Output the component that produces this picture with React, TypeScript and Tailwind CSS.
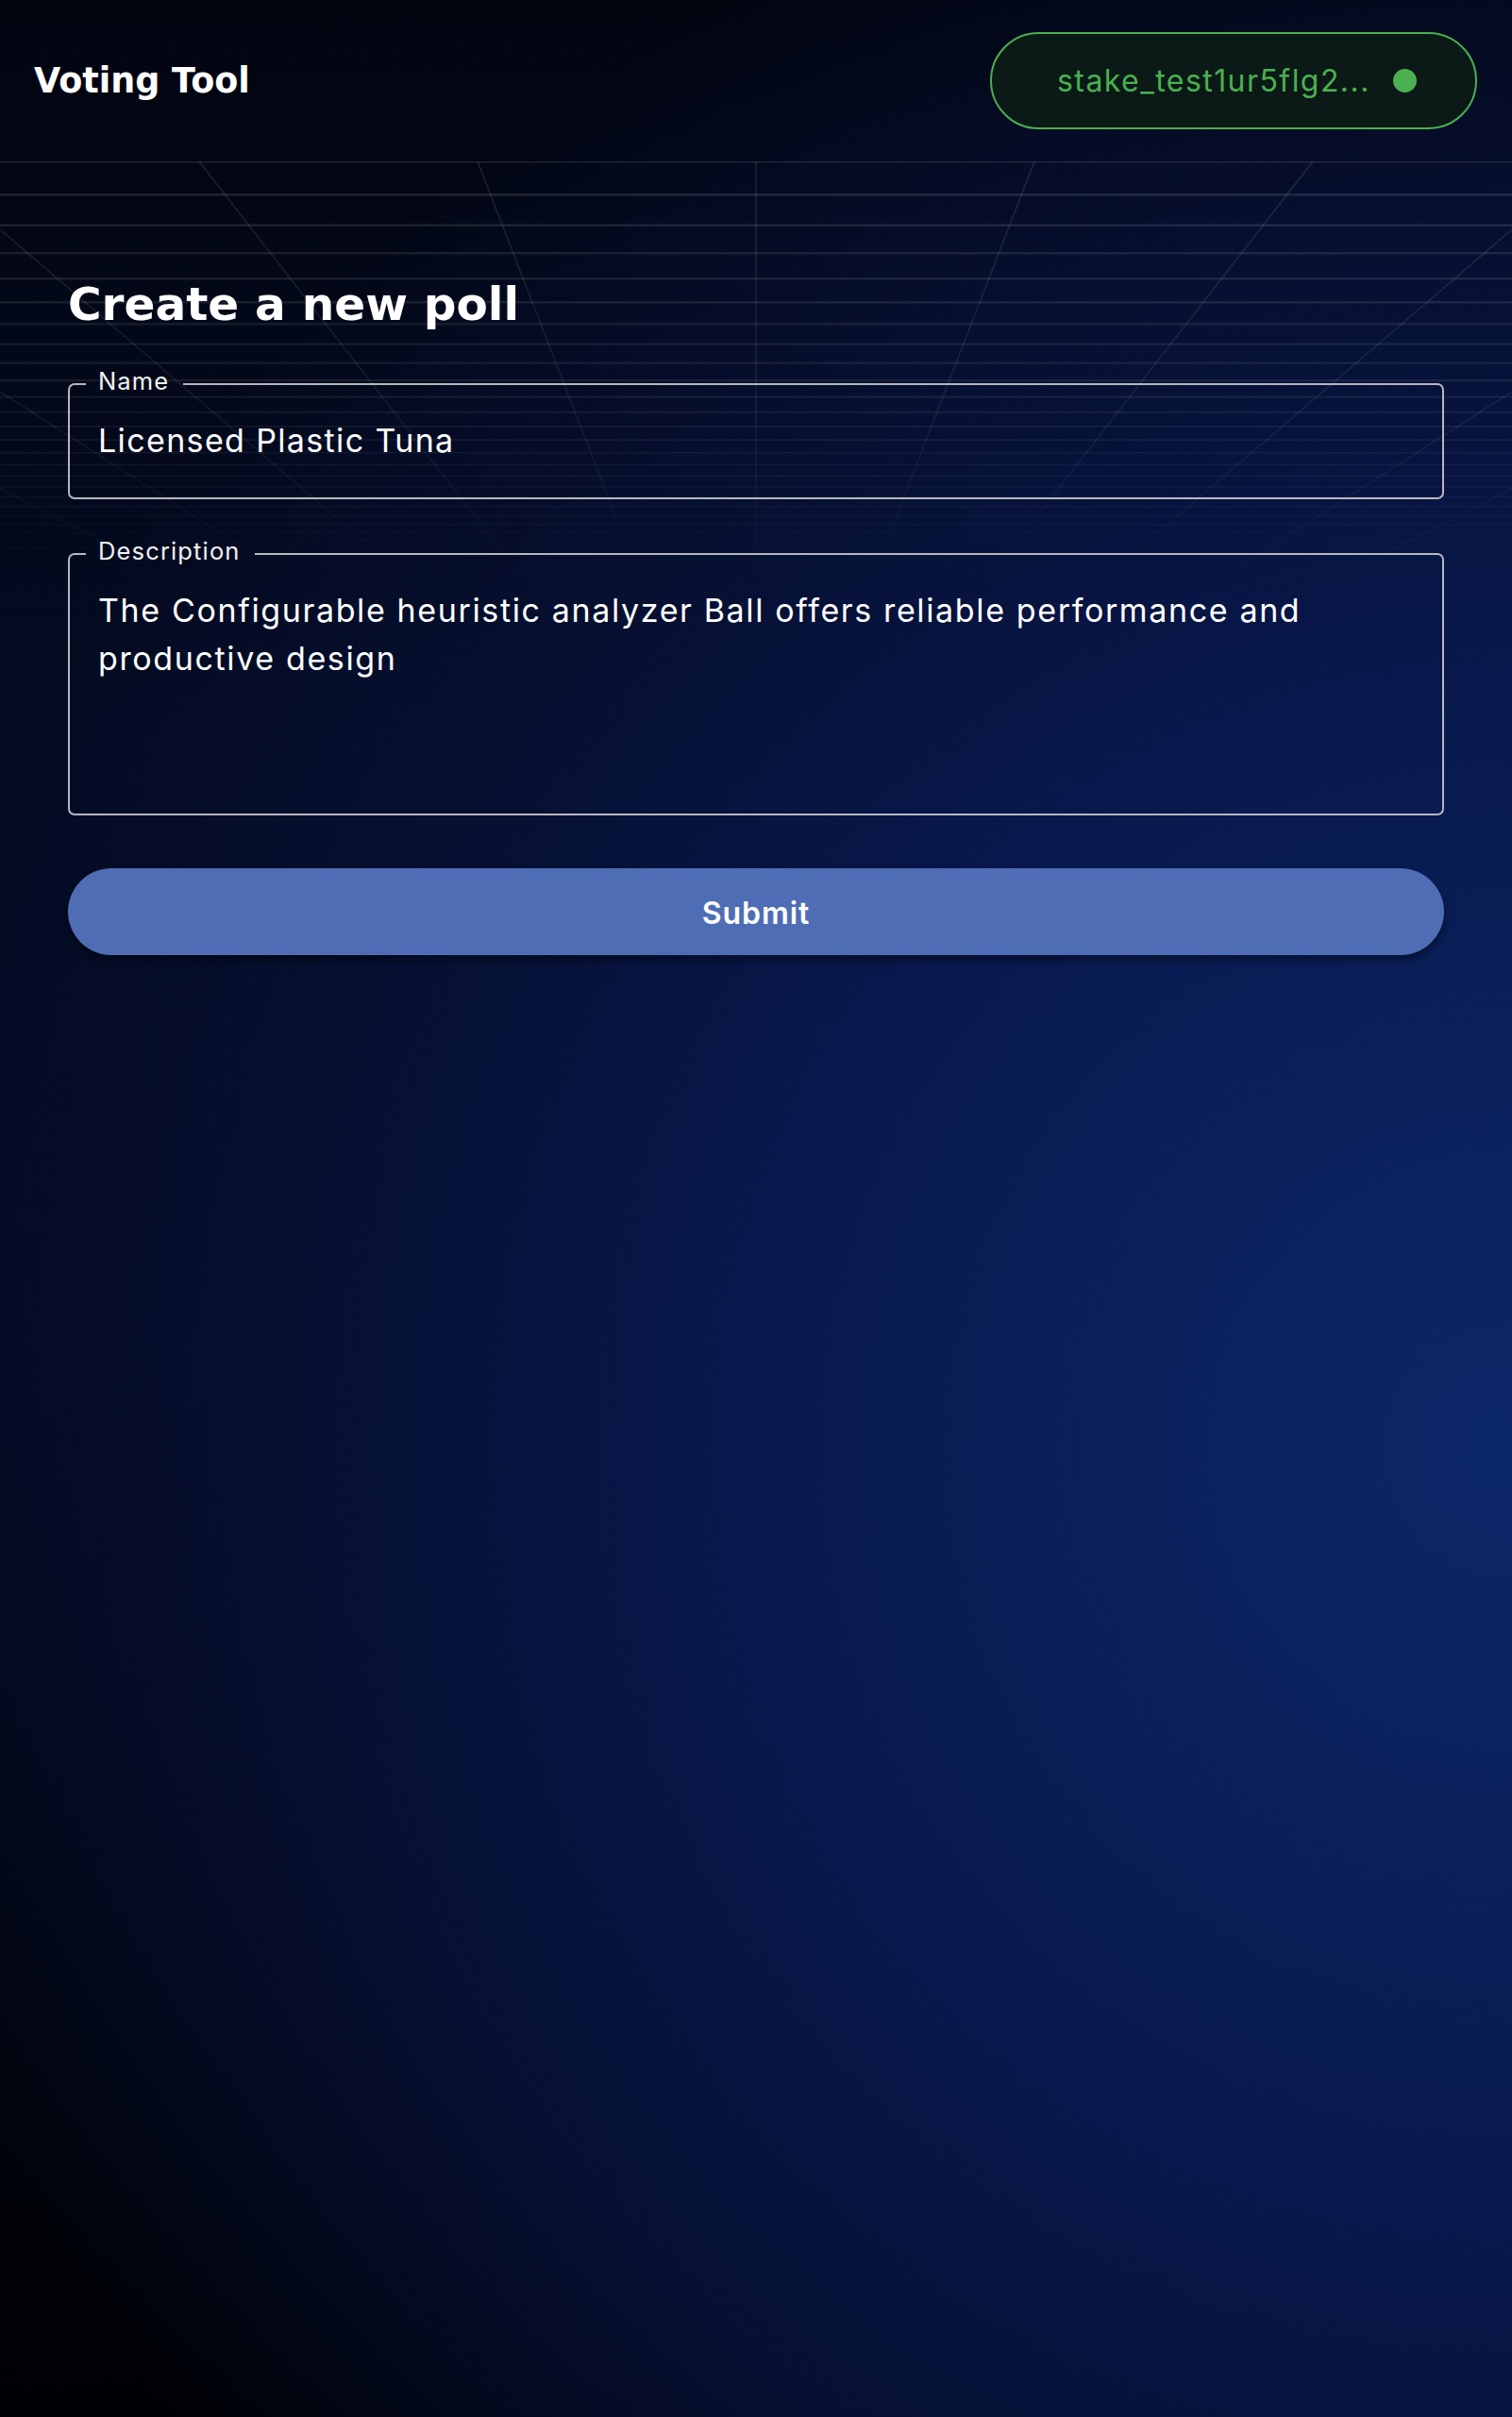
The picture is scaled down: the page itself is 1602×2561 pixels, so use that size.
import React from 'react';

// perspective floor under the header: rows get denser toward the vanishing point
const VP = 759; // vanishing point, px below the grid's top edge
const H = 445;

function PerspectiveGrid() {
  const rows: number[] = [];
  for (let n = 0; n < 60; n++) {
    const y = VP - 1 / (1 / VP + 0.0000645 * n);
    if (y > H) break;
    rows.push(y);
  }
  const cols: number[] = [];
  for (let k = -9; k <= 9; k++) cols.push(k);

  return (
    <svg
      className="pointer-events-none absolute left-0 top-[171px]"
      width="1602"
      height={H}
      viewBox={`0 0 1602 ${H}`}
    >
      <defs>
        <linearGradient id="gridFade" x1="0" y1="0" x2="0" y2={H} gradientUnits="userSpaceOnUse">
          <stop offset="0" stopColor="#ffffff" stopOpacity="0.11" />
          <stop offset="0.55" stopColor="#ffffff" stopOpacity="0.075" />
          <stop offset="0.8" stopColor="#ffffff" stopOpacity="0.035" />
          <stop offset="1" stopColor="#ffffff" stopOpacity="0" />
        </linearGradient>
      </defs>
      {rows.map((y, i) => (
        <line
          key={`r${i}`}
          x1={0}
          x2={1602}
          y1={y}
          y2={y}
          stroke="url(#gridFade)"
          strokeWidth={Math.max(1, (3 * (VP - y)) / VP)}
        />
      ))}
      {cols.map((k) => (
        <line
          key={`c${k}`}
          x1={801 + 295 * k}
          y1={0}
          x2={801 + (295 * k * (VP - H)) / VP}
          y2={H}
          stroke="url(#gridFade)"
          strokeWidth={1.5}
        />
      ))}
    </svg>
  );
}

function Field({ label, children }: { label: string; children: React.ReactNode }) {
  return (
    <fieldset className="m-0 rounded-[7px] border-2 border-[#b6b8be] p-0">
      <legend className="ml-[17px] pl-[13px] pr-[15px] text-[25.5px] leading-[26px] tracking-[0.045em] text-[#f2f2f2]">
        <span className="relative -top-[3px]">{label}</span>
      </legend>
      {children}
    </fieldset>
  );
}

export default function App() {
  return (
    <div className="relative min-h-[2561px] w-full overflow-hidden bg-[#020510] bg-[image:radial-gradient(ellipse_110%_68%_at_100%_60%,#0c2769_0%,#0a2059_28%,#08174a_50%,#061032_72%,rgba(4,10,32,0)_100%),linear-gradient(180deg,#020510_0%,#040b22_30%,#040a20_55%,#02050f_82%,#000104_100%)] font-['Inter',sans-serif] text-white">
      <PerspectiveGrid />

      <header className="relative flex h-[171px] items-center justify-between pl-[36px] pr-[37px]">
        <h1 className="font-['DejaVu_Sans',sans-serif] text-[36.5px] font-bold leading-[42px] text-white">
          Voting Tool
        </h1>
        <div className="flex h-[103px] w-[516px] items-center rounded-full border-2 border-[#4caf50] bg-[#0b1a16] pl-[69px] pr-[62px]">
          <span className="text-[32px] leading-[40px] tracking-[0.045em] text-[#4caf50]">
            stake_test1ur5flg2...
          </span>
          <span className="ml-auto h-[25px] w-[25px] rounded-full bg-[#4caf50]" />
        </div>
      </header>

      <main className="relative px-[72px] pt-[122px]">
        <h2 className="font-['DejaVu_Sans',sans-serif] text-[48.5px] font-bold leading-[58px] text-white">
          Create a new poll
        </h2>

        <form className="mt-[43px] flex flex-col">
          <Field label="Name">
            <input
              defaultValue="Licensed Plastic Tuna"
              className="block w-full bg-transparent px-[30px] pb-[35px] pt-[21px] text-[34px] leading-[51px] tracking-[0.04em] text-white outline-none"
            />
          </Field>

          <div className="mt-[45px]">
            <Field label="Description">
              <textarea
                rows={4}
                defaultValue="The Configurable heuristic analyzer Ball offers reliable performance and productive design"
                className="block w-full resize-none bg-transparent px-[30px] pb-[37px] pt-[21px] text-[34px] leading-[51px] tracking-[0.048em] text-white outline-none"
              />
            </Field>
          </div>

          <button
            type="button"
            className="mt-[56px] h-[92px] w-full rounded-full bg-[#4f6db5] pt-[3px] text-[32px] font-semibold tracking-[0.03em] text-white shadow-[0_5px_10px_rgba(0,0,0,0.45)]"
          >
            Submit
          </button>
        </form>
      </main>
    </div>
  );
}
